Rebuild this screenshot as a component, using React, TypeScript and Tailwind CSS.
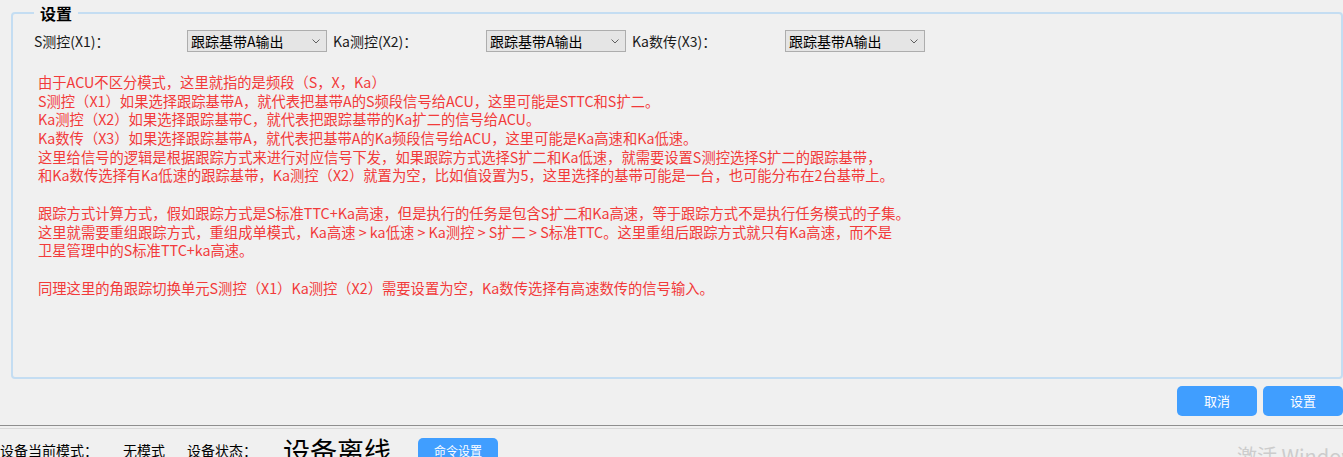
const cjk = "font-['Noto_Sans_CJK_SC',sans-serif]";

const channels = [
  { label: "S测控(X1)：", value: "跟踪基带A输出" },
  { label: "Ka测控(X2)：", value: "跟踪基带A输出" },
  { label: "Ka数传(X3)：", value: "跟踪基带A输出" },
];

const notes = [
  "由于ACU不区分模式，这里就指的是频段（S，X，Ka）",
  "S测控（X1）如果选择跟踪基带A，就代表把基带A的S频段信号给ACU，这里可能是STTC和S扩二。",
  "Ka测控（X2）如果选择跟踪基带C，就代表把跟踪基带的Ka扩二的信号给ACU。",
  "Ka数传（X3）如果选择跟踪基带A，就代表把基带A的Ka频段信号给ACU，这里可能是Ka高速和Ka低速。",
  "这里给信号的逻辑是根据跟踪方式来进行对应信号下发，如果跟踪方式选择S扩二和Ka低速，就需要设置S测控选择S扩二的跟踪基带，",
  "和Ka数传选择有Ka低速的跟踪基带，Ka测控（X2）就置为空，比如值设置为5，这里选择的基带可能是一台，也可能分布在2台基带上。",
  "",
  "跟踪方式计算方式，假如跟踪方式是S标准TTC+Ka高速，但是执行的任务是包含S扩二和Ka高速，等于跟踪方式不是执行任务模式的子集。",
  "这里就需要重组跟踪方式，重组成单模式，Ka高速 > ka低速 > Ka测控 > S扩二 > S标准TTC。这里重组后跟踪方式就只有Ka高速，而不是",
  "卫星管理中的S标准TTC+ka高速。",
  "",
  "同理这里的角跟踪切换单元S测控（X1）Ka测控（X2）需要设置为空，Ka数传选择有高速数传的信号输入。",
];

const Combo = ({ value }: { value: string }) => (
  <div className="w-[140px] h-[22px] flex items-center justify-between border border-[#adadad] bg-[#e5e5e5] pl-[3px] pr-[6px]">
    <span className="text-[14px] leading-none text-black">{value}</span>
    <svg width="8" height="5" viewBox="0 0 8 5" className="mt-[1px]">
      <path d="M0.5 0.5 L4 4 L7.5 0.5" fill="none" stroke="#606060" strokeWidth="1" />
    </svg>
  </div>
);

export default function App() {
  return (
    <div className={`w-[1343px] h-[457px] overflow-hidden bg-[#f0f0f0] flex flex-col ${cjk}`}>
      <fieldset className="shrink-0 ml-[11px] mt-[2px] w-[1332px] h-[377px] border-2 border-[#c4ddf2] rounded-[4px] px-[20px]">
        <legend className="ml-[1px] px-[6px] text-[16px] leading-[22px] font-bold text-black">设置</legend>
        <div className="flex mt-[6px]">
          {channels.map((c) => (
            <div key={c.label} className="flex items-center mr-[5px]">
              <span className="w-[154px] text-[14px] text-[#1a1a1a] pl-[1px]">{c.label}</span>
              <Combo value={c.value} />
            </div>
          ))}
        </div>
        <div className="mt-[21px] pl-[5px] text-[14.3px] leading-[18.7px] text-[#f23a3a]">
          {notes.map((n, i) => (
            <div key={i} className="h-[18.7px] whitespace-nowrap">{n}</div>
          ))}
        </div>
      </fieldset>

      <div className="shrink-0 flex justify-end gap-[6px] mt-[7px] h-[30px]">
        <button className="w-[80px] h-[30px] rounded-[5px] bg-[#409eff] text-white text-[13px]">取消</button>
        <button className="w-[80px] h-[30px] rounded-[5px] bg-[#409eff] text-white text-[13px]">设置</button>
      </div>

      <div className="shrink-0 mt-[9px] h-px bg-[#8e8e8e]" />
      <div className="shrink-0 mt-[2px] h-px bg-[#d9d9d9]" />

      <div className="shrink-0 flex items-start h-[40px] relative">
        <span className="mt-[11px] text-[14px] leading-[20px] text-black">设备当前模式：</span>
        <span className="mt-[11px] ml-[25px] text-[14px] leading-[20px] text-black">无模式</span>
        <span className="mt-[11px] ml-[22px] text-[14px] leading-[20px] text-black">设备状态：</span>
        <span className="mt-[5px] ml-[26px] text-[27px] leading-[34px] text-black">设备离线</span>
        <button className="mt-[9px] ml-[27px] w-[80px] h-[26px] rounded-[5px] bg-[#409eff] text-white text-[12px]">命令设置</button>
        <span className="absolute left-[1237px] top-[12px] text-[20px] text-[#cccccc] whitespace-nowrap">激活 Windows</span>
      </div>
    </div>
  );
}
